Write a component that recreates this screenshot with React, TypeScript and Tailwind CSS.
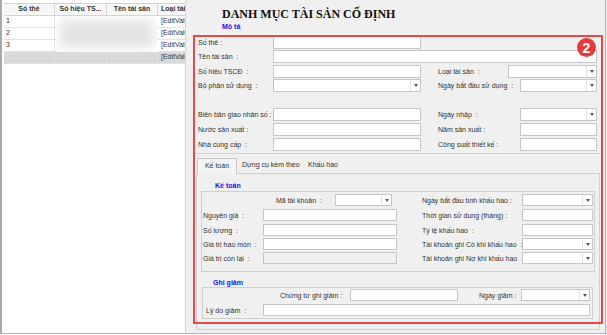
import React from 'react';

const font = "font-['Liberation_Sans',Arial,sans-serif]";

function Box({ w, disabled }: { w: string; disabled?: boolean }) {
    return <div className={`${w} h-full shrink-0 border border-[#c6c6c6] ${disabled ? 'bg-[#f0f0f0]' : 'bg-white'}`} />;
}

function Combo({ w }: { w: string }) {
    return (
        <div className={`${w} h-full shrink-0 border border-[#c6c6c6] bg-white flex justify-end`}>
            <div className="w-[10px] h-full border-l border-[#e2e2e2] flex items-center justify-center">
                <div className="w-0 h-0 border-l-[2px] border-r-[2px] border-t-[3px] border-l-transparent border-r-transparent border-t-[#555]" />
            </div>
        </div>
    );
}

function Label({ w, children }: { w: string; children: React.ReactNode }) {
    return <div className={`${w} shrink-0 whitespace-nowrap leading-none`}>{children}</div>;
}

function Grid() {
    const rows = ['1', '2', '3', ''];
    return (
        <div className="w-[186px] h-full shrink-0 border-l-2 border-l-[#a9a9a9] border-r border-r-[#d4d4d4] bg-white pl-[2px] pt-[3px]">
            <div className="flex h-[13px] border-y border-[#d4d4d4] bg-[#f7f7f7] font-bold text-[#333]">
                <div className="w-[51px] flex items-center justify-center border-r border-[#d4d4d4]">Số thẻ</div>
                <div className="w-[52px] flex items-center justify-center border-r border-[#d4d4d4]">Số hiệu TS...</div>
                <div className="w-[51px] flex items-center justify-center border-r border-[#d4d4d4]">Tên tài sản</div>
                <div className="w-[27px] flex items-center pl-[3px] overflow-hidden whitespace-nowrap">Loại tài sản</div>
            </div>
            <div className="relative">
                {rows.map((r, i) => (
                    <div key={i} className={`flex h-[12px] border-b border-[#e2e2e2] ${i === 3 ? 'bg-[#d9d9d9]' : ''}`}>
                        <div className="w-[51px] flex items-center pl-[2px] border-r border-[#e2e2e2]">{r}</div>
                        <div className="w-[52px] border-r border-[#e2e2e2]" />
                        <div className="w-[51px] border-r border-[#e2e2e2]" />
                        <div className="w-[27px] flex items-center pl-[3px] overflow-hidden whitespace-nowrap">[EditValue]</div>
                    </div>
                ))}
                <div className="absolute left-[52px] top-0 w-[102px] h-[36px] overflow-hidden bg-white">
                    <div className="absolute inset-[4px] bg-[#e3e3e3] blur-[6px]" />
                </div>
            </div>
        </div>
    );
}

export default function App() {
    return (
        <div className={`relative w-[607px] h-[335px] overflow-hidden bg-white text-[7px] text-[#333] ${font}`}>
            <div className="flex h-[334px] border-b border-[#b4b4b4] bg-[#f0f0f0]">
                <Grid />
                <div className="w-[420px] h-full border-r border-[#b4b4b4]">
                    <div className="h-[21px] pt-[8px] pl-[36px] font-['Liberation_Serif',serif] font-bold text-[12px] leading-[12px] text-[#111]">
                        DANH MỤC TÀI SẢN CỐ ĐỊNH
                    </div>
                    <div className="h-[12px] pl-[36px] flex items-center font-bold text-[#1515e6]">Mô tả</div>

                    {/* Mô tả */}
                    <div className="mt-[1px] ml-[9px] mr-[5px] pt-[2px] pb-[2px] px-[3px] border-b border-[#d4d4d4]">
                        <div className="flex items-center h-[13px]">
                            <Label w="w-[75px]">Số thẻ :</Label>
                            <Box w="w-[148px]" />
                        </div>
                        <div className="flex items-center h-[13px] mt-[1px]">
                            <Label w="w-[75px]">Tên tài sản&nbsp; :</Label>
                            <Box w="w-[324px]" />
                        </div>
                        <div className="flex items-center h-[13px] mt-[2px]">
                            <Label w="w-[75px]">Số hiệu TSCĐ&nbsp; :</Label>
                            <Box w="w-[148px]" />
                            <div className="w-[17px]" />
                            <Label w="w-[70px]">Loại tài sản&nbsp; :</Label>
                            <Combo w="w-[89px]" />
                        </div>
                        <div className="flex items-center h-[13px] mt-[1px]">
                            <Label w="w-[75px]">Bộ phận sử dụng&nbsp; :</Label>
                            <Combo w="w-[148px]" />
                            <div className="w-[17px]" />
                            <Label w="w-[82px]">Ngày bắt đầu sử dụng&nbsp; :</Label>
                            <Combo w="w-[77px]" />
                        </div>
                        <div className="flex items-center h-[13px] mt-[16px]">
                            <Label w="w-[75px]">Biên bản giao nhận số :</Label>
                            <Box w="w-[148px]" />
                            <div className="w-[17px]" />
                            <Label w="w-[82px]">Ngày nhập&nbsp; :</Label>
                            <Combo w="w-[77px]" />
                        </div>
                        <div className="flex items-center h-[13px] mt-[2px]">
                            <Label w="w-[75px]">Nước sản xuất :</Label>
                            <Box w="w-[148px]" />
                            <div className="w-[17px]" />
                            <Label w="w-[82px]">Năm sản xuất :</Label>
                            <Box w="w-[77px]" />
                        </div>
                        <div className="flex items-center h-[13px] mt-[2px]">
                            <Label w="w-[75px]">Nhà cung cấp&nbsp; :</Label>
                            <Box w="w-[148px]" />
                            <div className="w-[17px]" />
                            <Label w="w-[82px]">Công suất thiết kế :</Label>
                            <Box w="w-[77px]" />
                        </div>
                    </div>

                    {/* tabs */}
                    <div className="ml-[10px] mr-[5px] mt-[4px]">
                        <div className="flex h-[15px] pl-[1px]">
                            <div className="w-[40px] h-[16px] -mb-px relative z-10 border border-b-0 border-[#c8c8c8] bg-[#f4f4f4] flex items-center justify-center">Kế toán</div>
                            <div className="w-[66px] pl-[5px] flex items-center whitespace-nowrap">Dựng cụ kèm theo</div>
                            <div className="pl-[5px] flex items-center whitespace-nowrap">Khấu hao</div>
                        </div>
                        <div className="border border-[#d0d0d0] pt-[8px] pb-[10px]">
                            <div className="h-[9px] pl-[18px] flex items-center font-bold text-[#1515e6]">Kế toán</div>
                            <div className="mx-[4px] border border-[#d0d0d0] pt-[2px] pb-[7px] pl-[1px]">
                                <div className="flex items-center h-[12px]">
                                    <div className="w-[73px] shrink-0" />
                                    <Label w="w-[59px]">Mã tài khoản&nbsp; :</Label>
                                    <Combo w="w-[57px]" />
                                    <div className="w-[30px] shrink-0" />
                                    <Label w="w-[100px]">Ngày bắt đầu tính khấu hao :</Label>
                                    <Combo w="w-[71px]" />
                                </div>
                                <div className="flex items-center h-[12px] mt-[3px]">
                                    <Label w="w-[60px]">Nguyên giá&nbsp; :</Label>
                                    <Box w="w-[134px]" />
                                    <div className="w-[25px] shrink-0" />
                                    <Label w="w-[100px]">Thời gian sử dụng (tháng) :</Label>
                                    <Box w="w-[71px]" />
                                </div>
                                <div className="flex items-center h-[12px] mt-[3px]">
                                    <Label w="w-[60px]">Số lượng&nbsp; :</Label>
                                    <Box w="w-[134px]" />
                                    <div className="w-[25px] shrink-0" />
                                    <Label w="w-[100px]">Tỷ lệ khấu hao&nbsp; :</Label>
                                    <Box w="w-[71px]" />
                                </div>
                                <div className="flex items-center h-[12px] mt-[2px]">
                                    <Label w="w-[60px]">Giá trị hao mòn&nbsp; :</Label>
                                    <Box w="w-[134px]" />
                                    <div className="w-[25px] shrink-0" />
                                    <Label w="w-[100px]">Tài khoản ghi Có khi khấu hao&nbsp; :</Label>
                                    <Combo w="w-[71px]" />
                                </div>
                                <div className="flex items-center h-[12px] mt-[2px]">
                                    <Label w="w-[60px]">Giá trị còn lại&nbsp; :</Label>
                                    <Box w="w-[134px]" disabled />
                                    <div className="w-[25px] shrink-0" />
                                    <Label w="w-[100px]">Tài khoản ghi Nợ khi khấu hao&nbsp; :</Label>
                                    <Combo w="w-[71px]" />
                                </div>
                            </div>

                            <div className="h-[7px] mt-[8px] pl-[16px] flex items-center font-bold text-[#1515e6]">Ghi giảm</div>
                            <div className="ml-[5px] mr-[6px] border border-[#d0d0d0] pt-[1px] pb-[2px] pl-[3px]">
                                <div className="flex items-center h-[12px]">
                                    <div className="w-[74px] shrink-0" />
                                    <Label w="w-[70px]">Chứng từ ghi giảm :</Label>
                                    <Box w="w-[108px]" />
                                    <div className="w-[21px] shrink-0" />
                                    <Label w="w-[42px]">Ngày giảm :</Label>
                                    <Combo w="w-[69px]" />
                                </div>
                                <div className="flex items-center h-[12px] mt-[3px]">
                                    <Label w="w-[57px]">Lý do giảm&nbsp; :</Label>
                                    <Box w="w-[327px]" />
                                </div>
                            </div>
                        </div>
                    </div>
                </div>
            </div>

            {/* annotation overlay */}
            <div className="absolute left-[193px] top-[35px] w-[410px] h-[289px] border-2 border-[#e8484a] pointer-events-none" />
            <div className="absolute left-[577px] top-[38px] w-[19px] h-[19px] rounded-full bg-[#e23b3b] text-white font-bold text-[14px] leading-none flex items-center justify-center font-['Liberation_Sans',sans-serif]">
                2
            </div>
        </div>
    );
}
